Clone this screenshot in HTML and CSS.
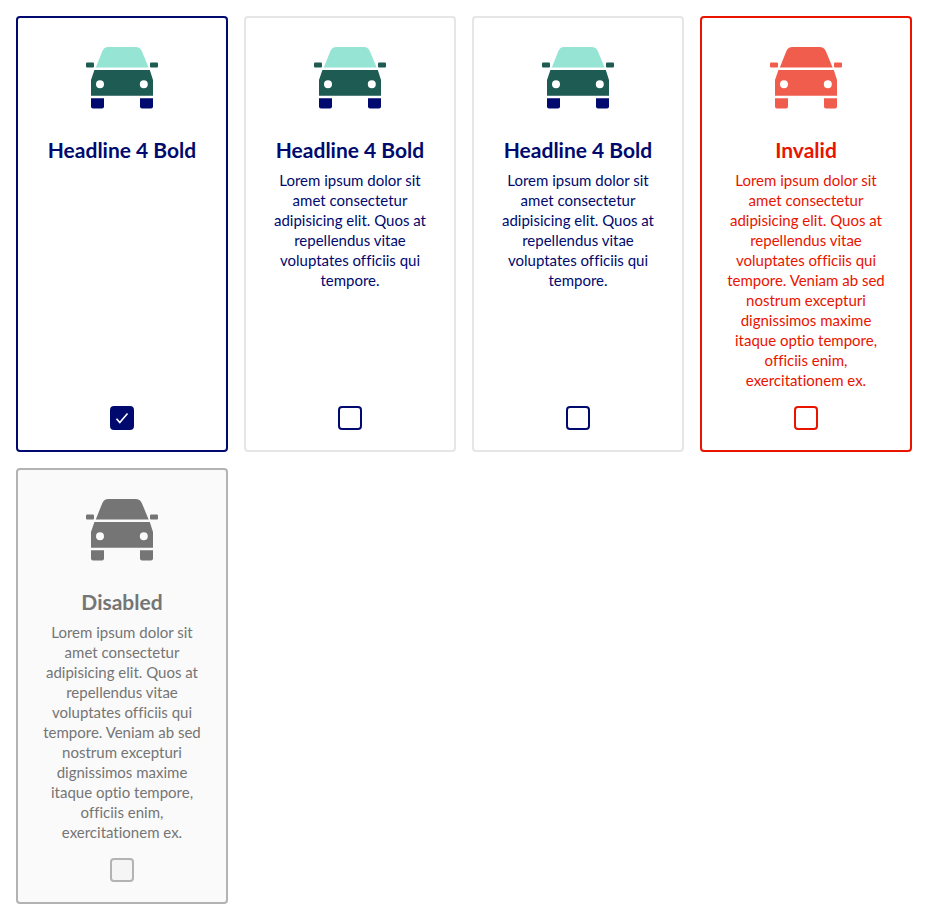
FILE: index.html
```html
<!DOCTYPE html>
<html lang="en">
<head>
<meta charset="utf-8">
<meta name="viewport" content="width=device-width, initial-scale=1">
<title>Checkbox tiles</title>
<link rel="stylesheet" href="styles.css">
</head>
<body>
<svg class="sprite" aria-hidden="true">
  <symbol id="car" viewBox="0 0 96 96">
    <path class="car-glass" d="M21.8 37.4 L28.2 21.4 Q30 17 34.4 17 H61.6 Q66 17 68 21.4 L74.6 37.4 Z"/>
    <path class="car-body" d="M20.4 40 H75.8 L79 50 V65.8 H17 V50 Z M26 50.2 a4 4 0 1 0 0 8 a4 4 0 1 0 0 -8 Z M69.8 50.2 a4 4 0 1 0 0 8 a4 4 0 1 0 0 -8 Z" fill-rule="evenodd"/>
    <rect class="car-body" x="12" y="32.4" width="8" height="5.2" rx="1"/>
    <rect class="car-body" x="76" y="32.4" width="8" height="5.2" rx="1"/>
    <path class="car-wheel" d="M17 68.2 H30 V76.6 Q30 78.6 28 78.6 H19 Q17 78.6 17 76.6 Z"/>
    <path class="car-wheel" d="M66 68.2 H79 V76.6 Q79 78.6 77 78.6 H68 Q66 78.6 66 76.6 Z"/>
  </symbol>
</svg>
<main class="tiles">
  <label class="tile">
    <svg class="tile-icon" aria-hidden="true"><use href="#car"/></svg>
    <span class="tile-title">Headline 4 Bold</span>
    <span class="check"><input class="check-input" type="checkbox" checked><svg class="check-mark" viewBox="0 0 24 24" aria-hidden="true"><path d="M6.5 12.8 L9.8 16.6 L17.5 7.4"/></svg></span>
  </label>
  <label class="tile">
    <svg class="tile-icon" aria-hidden="true"><use href="#car"/></svg>
    <span class="tile-title">Headline 4 Bold</span>
    <span class="tile-text">Lorem ipsum dolor sit amet consectetur adipisicing elit. Quos at repellendus vitae voluptates officiis qui tempore.</span>
    <span class="check"><input class="check-input" type="checkbox"></span>
  </label>
  <label class="tile">
    <svg class="tile-icon" aria-hidden="true"><use href="#car"/></svg>
    <span class="tile-title">Headline 4 Bold</span>
    <span class="tile-text">Lorem ipsum dolor sit amet consectetur adipisicing elit. Quos at repellendus vitae voluptates officiis qui tempore.</span>
    <span class="check"><input class="check-input" type="checkbox"></span>
  </label>
  <label class="tile tile-invalid">
    <svg class="tile-icon" aria-hidden="true"><use href="#car"/></svg>
    <span class="tile-title">Invalid</span>
    <span class="tile-text">Lorem ipsum dolor sit amet consectetur adipisicing elit. Quos at repellendus vitae voluptates officiis qui tempore. Veniam ab sed nostrum excepturi dignissimos maxime itaque optio tempore, officiis enim, exercitationem ex.</span>
    <span class="check"><input class="check-input" type="checkbox" aria-invalid="true"></span>
  </label>
  <label class="tile tile-disabled">
    <svg class="tile-icon" aria-hidden="true"><use href="#car"/></svg>
    <span class="tile-title">Disabled</span>
    <span class="tile-text">Lorem ipsum dolor sit amet consectetur adipisicing elit. Quos at repellendus vitae voluptates officiis qui tempore. Veniam ab sed nostrum excepturi dignissimos maxime itaque optio tempore, officiis enim, exercitationem ex.</span>
    <span class="check"><input class="check-input" type="checkbox" disabled></span>
  </label>
</main>
</body>
</html>
```
FILE: styles.css
```css
* {
  box-sizing: border-box;
}

body {
  margin: 0;
  background: #fff;
  font-family: Lato, "Liberation Sans", sans-serif;
  font-variant-ligatures: none;
}

.sprite {
  display: block;
  width: 0;
  height: 0;
}

.tiles {
  display: grid;
  grid-template-columns: repeat(auto-fill, minmax(200px, 1fr));
  gap: 16px;
  padding: 16px;
}

.tile {
  --ink: #000a6e;
  --line: #e6e6e6;
  --control: #000a6e;
  --control-fill: #fff;
  --glass: #95e4d4;
  --body: #1e5b52;
  --wheel: #000a6e;
  display: flex;
  flex-direction: column;
  align-items: center;
  padding: 12px 22px 20px;
  border: 2px solid var(--line);
  border-radius: 4px;
  background: #fff;
  color: var(--ink);
  text-align: center;
  cursor: pointer;
}

.tile:has(:checked) {
  --line: #000a6e;
  --control-fill: #000a6e;
}

.tile-invalid {
  --ink: #e91400;
  --line: #e91400;
  --control: #e91400;
  --glass: #f15d4c;
  --body: #f15d4c;
  --wheel: #f15d4c;
}

.tile-disabled {
  --ink: #757575;
  --line: #b3b3b3;
  --control: #b3b3b3;
  --control-fill: #f5f5f5;
  --glass: #757575;
  --body: #757575;
  --wheel: #757575;
  background: #fafafa;
  cursor: default;
}

.tile-icon {
  width: 96px;
  height: 96px;
}

.car-glass {
  fill: var(--glass);
}

.car-body {
  fill: var(--body);
}

.car-wheel {
  fill: var(--wheel);
}

.tile-title {
  margin: 12px 0 8px;
  font-size: 21px;
  font-weight: 700;
  line-height: 24px;
}

.tile-text {
  margin-bottom: 16px;
  font-size: 15px;
  line-height: 20px;
}

.check {
  display: grid;
  margin-top: auto;
}

.check-input,
.check-mark {
  grid-area: 1 / 1;
  width: 24px;
  height: 24px;
}

.check-input {
  margin: 0;
  appearance: none;
  border: 2px solid var(--control);
  border-radius: 4px;
  background: var(--control-fill);
}

.check-mark {
  fill: none;
  stroke: #fff;
  stroke-width: 1.6;
  pointer-events: none;
}

.check-input:not(:checked) + .check-mark {
  visibility: hidden;
}
```
